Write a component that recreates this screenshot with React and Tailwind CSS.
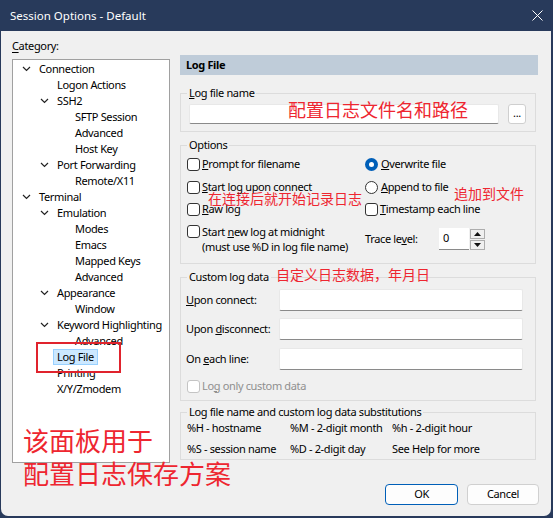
import React from "react";

const tree = [
  ["Connection", 0, true],
  ["Logon Actions", 1],
  ["SSH2", 1, true],
  ["SFTP Session", 2],
  ["Advanced", 2],
  ["Host Key", 2],
  ["Port Forwarding", 1, true],
  ["Remote/X11", 2],
  ["Terminal", 0, true],
  ["Emulation", 1, true],
  ["Modes", 2],
  ["Emacs", 2],
  ["Mapped Keys", 2],
  ["Advanced", 2],
  ["Appearance", 1, true],
  ["Window", 2],
  ["Keyword Highlighting", 1, true],
  ["Advanced", 2],
  ["Log File", 1, false, true],
  ["Printing", 1],
  ["X/Y/Zmodem", 1],
];

const indent = ["pl-[9px]", "pl-[27px]", "pl-[45px]"];

function Chevron() {
  return (
    <svg width="9" height="6" viewBox="0 0 9 6">
      <path d="M1 1 L4.5 4.5 L8 1" fill="none" stroke="#222" strokeWidth="1.2" />
    </svg>
  );
}

function TreeRow({ label, level, open, selected }) {
  return (
    <div className={`flex items-center h-[16px] ${indent[level]}`}>
      <div className="w-[17px] flex items-center">{open && <Chevron />}</div>
      {selected ? (
        <span className="-ml-[4px] px-[3px] h-[16px] leading-[14px] bg-[#cce8ff] border border-[#99d1ff]">
          {label}
        </span>
      ) : (
        <span className="leading-[16px]">{label}</span>
      )}
    </div>
  );
}

function Check({ disabled, className = "" }) {
  return (
    <div
      className={`w-[13px] h-[13px] shrink-0 rounded-[3px] border bg-white ${
        disabled ? "border-[#c4c4c4]" : "border-[#333]"
      } ${className}`}
    />
  );
}

function Radio({ on }) {
  return on ? (
    <div className="w-[13px] h-[13px] shrink-0 rounded-full bg-[#005fb8] flex items-center justify-center">
      <div className="w-[5px] h-[5px] rounded-full bg-white" />
    </div>
  ) : (
    <div className="w-[13px] h-[13px] shrink-0 rounded-full border border-[#333] bg-white" />
  );
}

function Group({ title, className, children }) {
  return (
    <fieldset className={`w-[356px] border border-[#dcdcdc] ${className}`}>
      <legend className="ml-[6px] px-[2px] leading-[16px]">{title}</legend>
      {children}
    </fieldset>
  );
}

function Field({ className }) {
  return (
    <div
      className={`bg-white border border-[#e8e8e8] border-b-[#8a8a8a] rounded-[2px] ${className}`}
    />
  );
}

function Red({ className, children }) {
  return (
    <div
      className={`absolute text-[#ee2630] tracking-normal font-['Noto_Sans_CJK_SC',sans-serif] whitespace-nowrap ${className}`}
    >
      {children}
    </div>
  );
}

export default function App() {
  return (
    <div className="relative w-[553px] h-[518px] bg-[#283a5b] overflow-hidden whitespace-nowrap text-[11px] text-black font-['Segoe_UI','Noto_Sans',sans-serif]">
      {/* title bar */}
      <div className="h-[31px] flex items-center pl-[10px] text-white text-[11.5px]">
        Session Options - Default
      </div>
      <svg className="absolute left-[532px] top-[10px]" width="11" height="11" viewBox="0 0 11 11">
        <path d="M0.5 0.5 L10.5 10.5 M10.5 0.5 L0.5 10.5" stroke="#fff" strokeWidth="1" />
      </svg>

      <div className="ml-[1px] mr-[2px] h-[485px] bg-[#f0f0f0] rounded-b-[7px] flex flex-col tracking-[-0.35px]">
        <div className="flex">
          {/* category tree */}
          <div className="ml-[11px] w-[158px]">
            <div className="mt-[7px] h-[16px] leading-[16px]">
              <u className="underline-offset-2">C</u>ategory:
            </div>
            <div className="mt-[5px] h-[404px] bg-white border border-[#a0a0a0] pt-[1px]">
              {tree.map(([label, level, open, selected], i) => (
                <TreeRow key={i} label={label} level={level} open={open} selected={selected} />
              ))}
            </div>
          </div>

          {/* log file page */}
          <div className="ml-[10px] w-[358px] mt-[24px]">
            <div className="h-[20px] leading-[20px] bg-[#bfccd9] pl-[6px] font-bold">Log File</div>

            <Group title={<><u>L</u>og file name</>} className="mt-[10px]">
              <div className="flex items-center pl-[8px] pt-[3px] pb-[7px]">
                <Field className="w-[310px] h-[20px]" />
                <div className="ml-[9px] w-[18px] h-[20px] bg-white border border-[#cfcfcf] rounded-[3px] flex items-center justify-center leading-none pb-[4px]">
                  ...
                </div>
              </div>
            </Group>

            <Group title="Options" className="mt-[5px]">
              <div className="pl-[6px] pb-[9px]">
                <div className="flex mt-[3px] h-[16px] items-center">
                  <div className="w-[178px] flex items-center gap-[2px]">
                    <Check />
                    <span><u>P</u>rompt for filename</span>
                  </div>
                  <div className="flex items-center gap-[3px]">
                    <Radio on />
                    <span><u>O</u>verwrite file</span>
                  </div>
                </div>
                <div className="flex mt-[7px] h-[16px] items-center">
                  <div className="w-[178px] flex items-center gap-[2px]">
                    <Check />
                    <span><u>S</u>tart log upon connect</span>
                  </div>
                  <div className="flex items-center gap-[3px]">
                    <Radio />
                    <span><u>A</u>ppend to file</span>
                  </div>
                </div>
                <div className="flex mt-[6px] h-[16px] items-center">
                  <div className="w-[178px] flex items-center gap-[2px]">
                    <Check />
                    <span><u>R</u>aw log</span>
                  </div>
                  <div className="flex items-center gap-[2px]">
                    <Check />
                    <span><u>T</u>imestamp each line</span>
                  </div>
                </div>
                <div className="flex mt-[7px] items-center">
                  <div className="w-[178px] flex items-start gap-[2px]">
                    <Check className="mt-[1px]" />
                    <div className="leading-[15px]">
                      <div>Start <u>n</u>ew log at midnight</div>
                      <div>(must use %D in log file name)</div>
                    </div>
                  </div>
                  <div className="flex items-center">
                    <span className="w-[74px]">Trace le<u>v</u>el:</span>
                    <div className="w-[30px] h-[22px] bg-white border-b border-[#8a8a8a] pl-[4px] leading-[20px]">0</div>
                    <div className="flex flex-col gap-[1px] ml-[1px]">
                      <div className="w-[15px] h-[10px] bg-[#f0f0f0] border border-[#adadad] flex items-center justify-center">
                        <svg width="7" height="4" viewBox="0 0 7 4"><path d="M0 4 L3.5 0 L7 4 Z" fill="#111" /></svg>
                      </div>
                      <div className="w-[15px] h-[10px] bg-[#f0f0f0] border border-[#adadad] flex items-center justify-center">
                        <svg width="7" height="4" viewBox="0 0 7 4"><path d="M0 0 L3.5 4 L7 0 Z" fill="#111" /></svg>
                      </div>
                    </div>
                  </div>
                </div>
              </div>
            </Group>

            <Group title="Custom log data" className="mt-[5px]">
              <div className="pl-[5px] pb-[6px]">
                <div className="flex items-center mt-[4px]">
                  <span className="w-[93px]"><u>U</u>pon connect:</span>
                  <Field className="w-[244px] h-[22px]" />
                </div>
                <div className="flex items-center mt-[7px]">
                  <span className="w-[93px]">Upon <u>d</u>isconnect:</span>
                  <Field className="w-[244px] h-[22px]" />
                </div>
                <div className="flex items-center mt-[8px]">
                  <span className="w-[93px]">On <u>e</u>ach line:</span>
                  <Field className="w-[244px] h-[22px]" />
                </div>
                <div className="flex items-center gap-[2px] mt-[8px] h-[16px] text-[#8f8f8f] pl-[1px]">
                  <Check disabled />
                  <span>Lo<u>g</u> only custom data</span>
                </div>
              </div>
            </Group>

            <Group title="Log file name and custom log data substitutions" className="mt-[3px]">
              <div className="pl-[6px] pb-[2px]">
                <div className="flex h-[16px] items-center">
                  <span className="w-[103px]">%H - hostname</span>
                  <span className="w-[102px]">%M - 2-digit month</span>
                  <span>%h - 2-digit hour</span>
                </div>
                <div className="flex h-[16px] items-center mt-[5px]">
                  <span className="w-[103px]">%S - session name</span>
                  <span className="w-[102px]">%D - 2-digit day</span>
                  <span>See Help for more</span>
                </div>
              </div>
            </Group>
          </div>
        </div>

        {/* dialog buttons */}
        <div className="flex justify-end gap-[9px] pr-[12px] mt-[21px]">
          <div className="w-[73px] h-[21px] bg-[#fdfdfd] border border-[#005fb8] rounded-[4px] flex items-center justify-center">
            OK
          </div>
          <div className="w-[72px] h-[21px] bg-[#fdfdfd] border border-[#d0d0d0] rounded-[4px] flex items-center justify-center">
            Cancel
          </div>
        </div>
      </div>

      {/* red annotations */}
      <div className="absolute left-[36px] top-[342px] w-[85px] h-[31px] border-2 border-[#e0232d]" />
      <Red className="left-[288px] top-[100px] text-[18px] leading-[18px]">配置日志文件名和路径</Red>
      <Red className="left-[208px] top-[191px] text-[14px] leading-[14px]">在连接后就开始记录日志</Red>
      <Red className="left-[454px] top-[186px] text-[14px] leading-[14px]">追加到文件</Red>
      <Red className="left-[276px] top-[267px] text-[14px] leading-[14px]">自定义日志数据，年月日</Red>
      <Red className="left-[23px] top-[427px] text-[26px] leading-[26px]">该面板用于</Red>
      <Red className="left-[23px] top-[460px] text-[26px] leading-[26px]">配置日志保存方案</Red>
    </div>
  );
}
